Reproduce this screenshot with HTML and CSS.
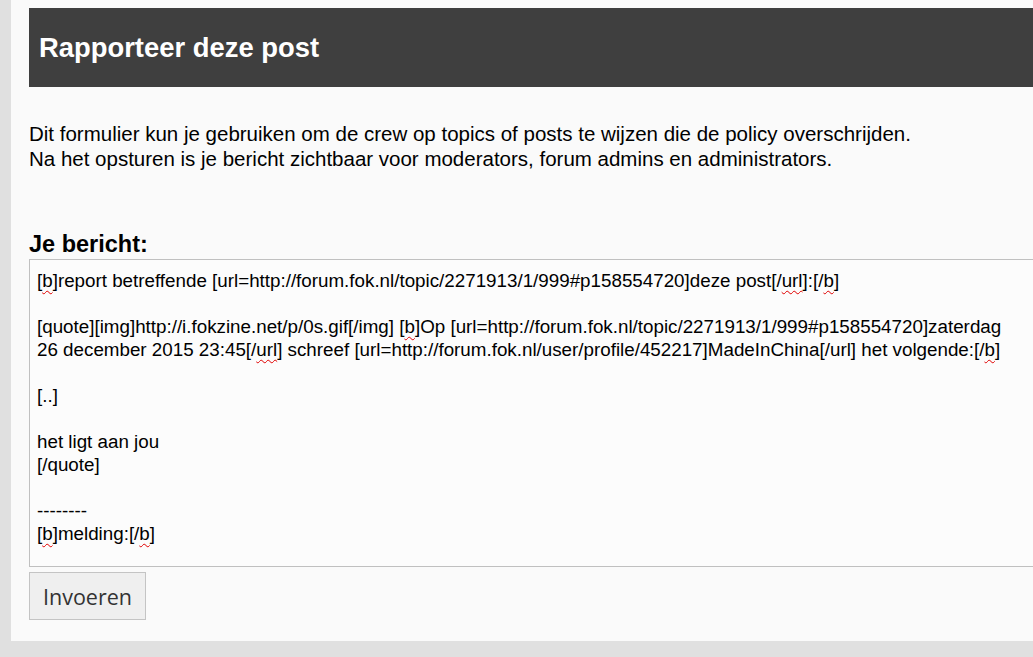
FILE: index.html
```html
<!DOCTYPE html>
<html lang="nl">
<head>
<meta charset="utf-8">
<title>Rapporteer deze post</title>
<link rel="stylesheet" href="styles.css">
</head>
<body>
<div class="panel">
  <div class="header"><h1 class="title">Rapporteer deze post</h1></div>
  <p class="intro">Dit formulier kun je gebruiken om de crew op topics of posts te wijzen die de policy overschrijden.<br>Na het opsturen is je bericht zichtbaar voor moderators, forum admins en administrators.</p>
  <form class="form">
    <label class="label">Je bericht:</label>
    <div class="textarea" role="textbox" aria-multiline="true"><div>[<span class="sp">b</span>]report betreffende [url=http://forum.fok.nl/topic/2271913/1/999#p158554720]deze post[/<span class="sp">url</span>]:[/<span class="sp">b</span>]</div><div>&nbsp;</div><div>[quote][img]http://i.fokzine.net/p/0s.gif[/img] [<span class="sp">b</span>]Op [url=http://forum.fok.nl/topic/2271913/1/999#p158554720]zaterdag 26 december 2015 23:45[/<span class="sp">url</span>] schreef [url=http://forum.fok.nl/user/profile/452217]MadeInChina[/url] het volgende:[/<span class="sp">b</span>]</div><div>&nbsp;</div><div>[..]</div><div>&nbsp;</div><div>het ligt aan jou</div><div>[/quote]</div><div>&nbsp;</div><div>--------</div><div>[<span class="sp">b</span>]melding:[/<span class="sp">b</span>]</div></div>
    <button type="button" class="btn">Invoeren</button>
  </form>
</div>
</body>
</html>
```
FILE: styles.css
```css
html, body {
  margin: 0;
  padding: 0;
}
body {
  background: #e0e0e0;
  overflow: hidden;
  font-family: "Liberation Sans", Arial, sans-serif;
  color: #000;
}
.panel {
  margin-left: 11px;
  margin-right: -60px;
  background: #fafafa;
  padding: 8px 0 21px 18px;
}
.header {
  background: #3f3f3f;
  height: 79px;
  display: flex;
  align-items: center;
  padding-left: 10px;
}
.title {
  margin: 0;
  color: #fff;
  font-size: 27.4px;
  font-weight: bold;
}
.intro {
  margin: 34px 0 0 0;
  font-size: 20.5px;
  line-height: 25px;
}
.form {
  margin-top: 60px;
  display: flex;
  flex-direction: column;
  align-items: flex-start;
}
.label {
  font-size: 23.5px;
  font-weight: bold;
  line-height: 26px;
}
.textarea {
  box-sizing: border-box;
  width: 1011px;
  margin-top: 2px;
  height: 308px;
  border: 1px solid #c0c0c0;
  background: #fcfcfc;
  padding: 9px 28px 9px 7px;
  font-size: 18.8px;
  line-height: 23px;
  overflow: hidden;
}
.sp {
  text-decoration: underline wavy #e00000;
  text-decoration-thickness: 1px;
  text-underline-offset: 3px;
}
.btn {
  margin-top: 5px;
  width: 117px;
  height: 48px;
  background: #efefef;
  border: 1px solid #c4c4c4;
  border-radius: 0;
  font-family: "Open Sans", "Noto Sans", sans-serif;
  font-size: 21.5px;
  color: #333;
  padding: 0;
}
```
